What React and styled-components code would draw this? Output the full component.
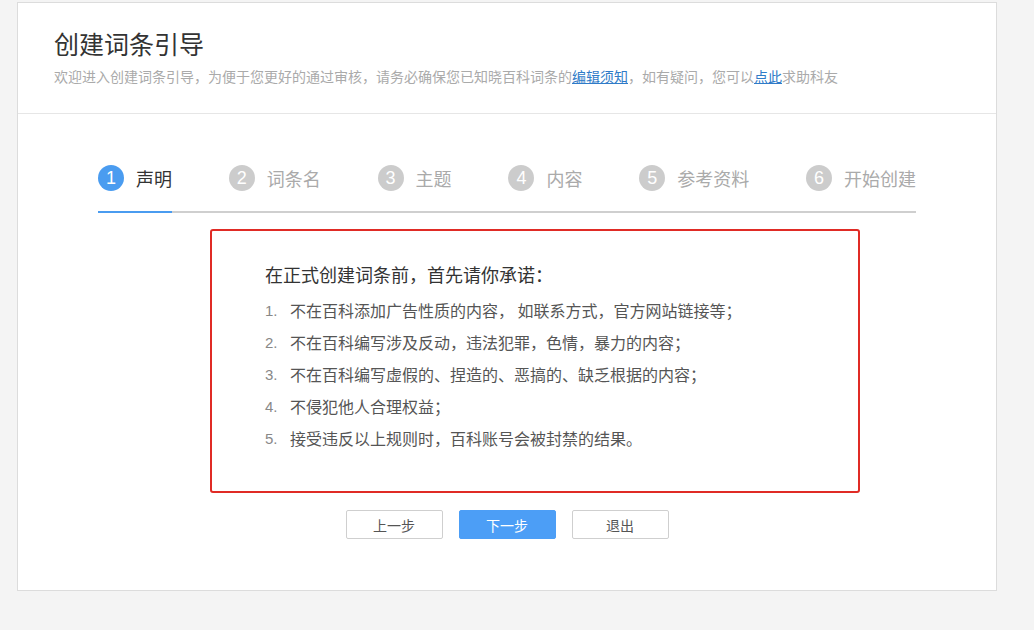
import React from "react";
import styled, { createGlobalStyle } from "styled-components";

const steps = ["声明", "词条名", "主题", "内容", "参考资料", "开始创建"];

const rules = [
  "不在百科添加广告性质的内容， 如联系方式，官方网站链接等；",
  "不在百科编写涉及反动，违法犯罪，色情，暴力的内容；",
  "不在百科编写虚假的、捏造的、恶搞的、缺乏根据的内容；",
  "不侵犯他人合理权益；",
  "接受违反以上规则时，百科账号会被封禁的结果。",
];

const App = () => {
  return (
    <Page>
      <GlobalStyle />
      <Card>
        <Header>
          <Title>创建词条引导</Title>
          <Intro>
            欢迎进入创建词条引导，为便于您更好的通过审核，请务必确保您已知晓百科词条的
            <TextLink href="#">编辑须知</TextLink>，如有疑问，您可以
            <TextLink href="#">点此</TextLink>求助科友
          </Intro>
        </Header>
        <Body>
          <Steps>
            {steps.map((name, i) => (
              <Step key={name} $active={i === 0}>
                <StepNum $active={i === 0}>{i + 1}</StepNum>
                <StepName $active={i === 0}>{name}</StepName>
              </Step>
            ))}
          </Steps>
          <Notice>
            <NoticeTitle>在正式创建词条前，首先请你承诺：</NoticeTitle>
            <RuleList>
              {rules.map((rule, i) => (
                <Rule key={i}>
                  <RuleNum>{i + 1}.</RuleNum>
                  <span>{rule}</span>
                </Rule>
              ))}
            </RuleList>
          </Notice>
          <Actions>
            <Button>上一步</Button>
            <Button $primary>下一步</Button>
            <Button>退出</Button>
          </Actions>
        </Body>
      </Card>
    </Page>
  );
};

const GlobalStyle = createGlobalStyle`
  html, body {
    margin: 0;
    padding: 0;
    background: #f4f4f4;
  }
  body {
    font-family: "Noto Sans CJK SC", "Liberation Sans", sans-serif;
  }
`;

const Page = styled.div`
  width: 1034px;
  height: 630px;
  padding: 2px 0 0 17px;
  box-sizing: border-box;
  background: #f4f4f4;
`;

const Card = styled.div`
  width: 980px;
  height: 589px;
  box-sizing: border-box;
  background: #fff;
  border: 1px solid #dcdcdc;
`;

const Header = styled.div`
  height: 111px;
  box-sizing: border-box;
  padding: 23px 36px 0;
  border-bottom: 1px solid #e6e6e6;
`;

const Title = styled.h1`
  margin: 0;
  font-size: 25px;
  font-weight: 400;
  line-height: 34px;
  color: #333;
`;

const Intro = styled.p`
  margin: 6px 0 0;
  font-size: 14px;
  line-height: 20px;
  color: #aaa;
`;

const TextLink = styled.a`
  color: #2f7bc8;
  text-decoration: underline;
`;

const Body = styled.div`
  padding: 51px 0 50px;
`;

const Steps = styled.div`
  display: flex;
  justify-content: space-between;
  margin: 0 80px;
  border-bottom: 2px solid #cfcfcf;
`;

const Step = styled.div`
  display: flex;
  align-items: center;
  gap: 12px;
  padding-bottom: 20px;
  margin-bottom: -2px;
  border-bottom: 2px solid ${(p) => (p.$active ? "#4a9cf0" : "transparent")};
`;

const StepNum = styled.span`
  width: 26px;
  height: 26px;
  border-radius: 50%;
  display: flex;
  align-items: center;
  justify-content: center;
  font-family: "Liberation Sans", Arial, sans-serif;
  font-size: 18px;
  color: #fff;
  background: ${(p) => (p.$active ? "#4a9cf0" : "#cccccc")};
`;

const StepName = styled.span`
  font-size: 18px;
  line-height: 26px;
  color: ${(p) => (p.$active ? "#333" : "#aaa")};
`;

const Notice = styled.div`
  width: 650px;
  box-sizing: border-box;
  margin: 16px 0 0 192px;
  padding: 31px 53px 37px;
  border: 2px solid #e02b25;
  border-radius: 3px;
`;

const NoticeTitle = styled.div`
  font-size: 18px;
  line-height: 24px;
  color: #333;
  margin-bottom: 8px;
`;

const RuleList = styled.ol`
  list-style: none;
  margin: 0;
  padding: 0;
`;

const Rule = styled.li`
  display: flex;
  align-items: center;
  height: 32px;
  font-size: 16px;
  color: #555;
`;

const RuleNum = styled.span`
  width: 25px;
  flex-shrink: 0;
  color: #888;
  font-size: 15px;
  font-family: "Liberation Sans", Arial, sans-serif;
`;

const Actions = styled.div`
  display: flex;
  justify-content: center;
  gap: 16px;
  margin-top: 17px;
`;

const Button = styled.button`
  width: 97px;
  height: 29px;
  padding: 0;
  font-family: inherit;
  font-size: 14px;
  border-radius: 2px;
  cursor: pointer;
  border: 1px solid ${(p) => (p.$primary ? "#4c9ef6" : "#cfcfcf")};
  background: ${(p) => (p.$primary ? "#4c9ef6" : "#fff")};
  color: ${(p) => (p.$primary ? "#fff" : "#555")};
`;

export default App;
